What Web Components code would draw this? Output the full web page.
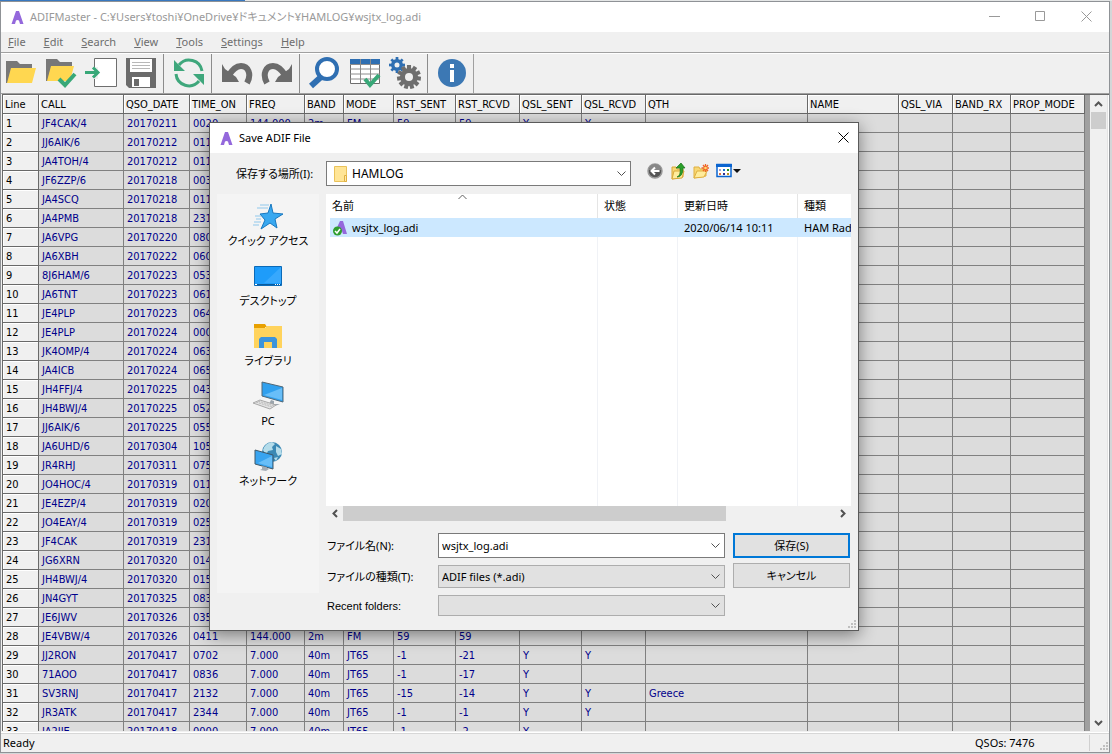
<!DOCTYPE html>
<html lang="ja">
<head>
<meta charset="utf-8">
<title>ADIFMaster</title>
<style>
  html, body { margin: 0; height: 100%; }
  body {
    overflow: hidden;
    --ui: "Noto Sans", "Noto Sans CJK JP", sans-serif;
    --grid: "DejaVu Sans Condensed", "DejaVu Sans", sans-serif;
    --face: #f0f0f0;
    --line: #808080;
    font-family: var(--ui);
    font-size: 12px;
    color: #000;
  }
</style>
</head>
<body>
<adif-desktop>
  <adif-window>
    <title-bar slot="title">ADIFMaster - C:¥Users¥toshi¥OneDrive¥ドキュメント¥HAMLOG¥wsjtx_log.adi</title-bar>
    <menu-bar slot="menu" items="File,Edit,Search,View,Tools,Settings,Help"></menu-bar>
    <tool-bar slot="tools"></tool-bar>
    <log-grid slot="content"></log-grid>
    <status-bar slot="status">Ready<span slot="count">QSOs: 7476</span></status-bar>
  </adif-window>
  <save-dialog></save-dialog>
</adif-desktop>

<script>
const define = (name, html, setup) => {
  const template = document.createElement('template');
  template.innerHTML = html;
  customElements.define(name, class extends HTMLElement {
    constructor() {
      super();
      this.attachShadow({ mode: 'open' }).append(template.content.cloneNode(true));
    }
    connectedCallback() {
      if (setup && !this.ready) { this.ready = true; setup(this, this.shadowRoot); }
    }
  });
};

const LOGO = `<svg width="13" height="13" viewBox="0 0 13 13" aria-hidden="true"><path d="M5 0h3l4.500 13H9L8 9.500Q6.500 8.500 5 9.500L4 13H.5z" fill="#9468dc"/></svg>`;
const GRIP = `<svg width="9" height="9" viewBox="0 0 9 9" fill="#bfbfbf" aria-hidden="true"><path d="M6 0h2v2H6zM3 3h2v2H3zM6 3h2v2H6zM0 6h2v2H0zM3 6h2v2H3zM6 6h2v2H6z"/></svg>`;
const gear = (cx, cy, r, hole, n, color) => {
  let teeth = '';
  for (let i = 0; i < n; i++)
    teeth += `<rect x="${cx - r * .17}" y="${cy - r}" width="${r * .34}" height="${r * .5}" transform="rotate(${i * 360 / n} ${cx} ${cy})"/>`;
  return `<g fill="${color}">${teeth}</g><circle cx="${cx}" cy="${cy}" r="${(r * .75 + hole) / 2}" fill="none" stroke="${color}" stroke-width="${r * .75 - hole}"/>`;
};
const FOLDER = `<path d="M0 3h11l3 3h12v4H6L2 25H0z" fill="#787878"/><path d="M5 10h25l-4 15H1z" fill="#ffd750"/>`;
const ICONS = {
  Open: `<g transform="translate(1 1)">${FOLDER}</g>`,
  'Open and check': `<g transform="translate(1 -1)"><path d="M0 3h11l3 3h12v4H6L2 25H0z" fill="#787878"/><path d="M5 10h23l-4 15H1z" fill="#ffd750"/></g><path d="M14 22l6 6L30 17" fill="none" stroke="#38a878" stroke-width="4"/>`,
  Import: `<path d="M9.500 1.500h22v28h-22z" fill="#fff" stroke="#6e6e6e"/><path d="M5 10h8v12H5z" fill="#f0f0f0"/><path d="M9 12v9" stroke="#fff"/><path d="M0 15.500h13M8 10.500l5 5-5 5" fill="none" stroke="#38a878" stroke-width="3"/>`,
  Save: `<path d="M1 1h30v30H4l-3-3z" fill="#6b6b6b"/><path d="M5 2h22v13H5z" fill="#fff"/><path d="M7 5.500h18M7 8.500h18M7 11.500h18" stroke="#b8b8b8"/><path d="M7 20h18v10H7z" fill="#fff"/><path d="M9 22h5v7H9z" fill="#6b6b6b"/>`,
  Refresh: `<g fill="none" stroke="#3fa77c" stroke-width="3"><path d="M29 14A13 13 0 0 0 6 8"/><path d="M3 17a13 13 0 0 0 23 7"/></g><path d="M1 3v11h11zM31 28V17H20z" fill="#3fa77c"/>`,
  Undo: `<path d="M26 26C31 17 27 9 20 9c-5 0-8 3-12 9" fill="none" stroke="#6b6b6b" stroke-width="6"/><path d="M1 7l3 5 11 8 3 5H1z" fill="#6b6b6b"/>`,
  Redo: `<path d="M6 26C1 17 5 9 12 9c5 0 8 3 12 9" fill="none" stroke="#6b6b6b" stroke-width="6"/><path d="M31 7l-3 5-11 8-3 5h17z" fill="#6b6b6b"/>`,
  Find: `<path d="M2 29l10-9" stroke="#2f6fb2" stroke-width="6"/><circle cx="18" cy="12" r="10" fill="#fff" stroke="#2f6fb2" stroke-width="4"/>`,
  Table: `<path d="M1.500 2.500h29v24h-29z" fill="#fff" stroke="#6e6e6e"/><path d="M1 2h30v5H1z" fill="#2f6fb2"/><path d="M1 7.500h30M1 12h30M1 17h30M1 22h30M11.500 2v24M21.500 2v24" stroke="#8c8c8c"/><path d="M16 22l5 6 9-10" fill="none" stroke="#38a878" stroke-width="4"/>`,
  Options: gear(8, 8, 8, 2.5, 8, '#2f6fb2') + gear(20, 20, 12, 4, 11, '#6e6e6e'),
  About: `<circle cx="15" cy="16" r="14" fill="#3c78b4"/><path d="M13 7h4v4h-4zM13 13h4v12h-4z" fill="#fff"/>`
};

define('adif-desktop', `
  <style>
    :host { display: block; position: relative; box-sizing: border-box; height: 100vh; padding: 1px 2px 1px 0;
      background: linear-gradient(90deg, #3878c0 245px, #e4e6e6 245px) top / 100% 1px no-repeat, #d3d7d8; }
  </style><slot></slot>`);

define('adif-window', `
  <style>
    :host { display: flex; flex-direction: column; box-sizing: border-box; height: 100%; border: 1px solid #8f9296; background: var(--face); }
    ::slotted(log-grid) { flex: 1; min-height: 0; }
  </style>
  <slot name="title"></slot><slot name="menu"></slot><slot name="tools"></slot><slot name="content"></slot><slot name="status"></slot>`);

define('title-bar', `
  <style>
    :host { display: flex; align-items: center; height: 30px; padding-left: 10px; background: #fff; color: #999; }
    h1 { flex: 1; margin: 0 0 0 6px; font: 11px/16px var(--ui); white-space: nowrap; font-feature-settings: "palt"; }
    button { display: grid; place-items: center; width: 46px; height: 28px; margin-bottom: 2px; padding: 0; border: 0; background: none; }
    svg { fill: none; }
  </style>
  ${LOGO}
  <h1><slot></slot></h1>
  <button aria-label="Minimize"><svg width="11" height="11" stroke="#999"><path d="M0 5.500h11"/></svg></button>
  <button aria-label="Maximize"><svg width="11" height="11" stroke="#999"><path d="M.5 .5h9v9H.5z"/></svg></button>
  <button aria-label="Close"><svg width="11" height="11" stroke="#999"><path d="M.5 .5l10 10M10.500 .5l-10 10"/></svg></button>`);

define('menu-bar', `
  <style>
    :host { display: block; height: 20px; border-bottom: 1px solid #a0a0a0; box-shadow: 0 1px #fff; margin-bottom: 1px; }
    nav { display: flex; gap: 18px; padding-left: 7px; }
    button { padding: 0; border: 0; background: none; font: 11px/20px var(--ui); color: #6d6d6d; }
    button::first-letter { text-decoration: underline; }
  </style><nav></nav>`,
  (host, root) => {
    root.querySelector('nav').innerHTML = host.getAttribute('items').split(',')
      .map(t => `<button>${t}</button>`).join('');
  });

define('tool-bar', `
  <style>
    :host { display: flex; height: 39px; border-bottom: 1px solid #a0a0a0; }
    .group { display: flex; border-right: 1px solid #8c8c8c; padding-right: 2px; margin-right: 5px; }
    .group:last-child { padding: 0; border-color: #a0a0a0; }
    button { display: grid; place-items: center; width: 40px; height: 37px; padding: 0; border: 0; background: none; }
  </style>`,
  (host, root) => {
    const groups = [['Open', 'Open and check', 'Import', 'Save'], ['Refresh'], ['Undo', 'Redo'], ['Find', 'Table', 'Options'], ['About']];
    for (const names of groups) {
      const div = document.createElement('div');
      div.className = 'group';
      div.innerHTML = names.map(n => `<button aria-label="${n}"><svg width="32" height="32" viewBox="0 0 32 32">${ICONS[n]}</svg></button>`).join('');
      root.append(div);
    }
  });

const COLUMNS = [['Line', 36], ['CALL', 85], ['QSO_DATE', 66], ['TIME_ON', 57], ['FREQ', 58], ['BAND', 39], ['MODE', 50], ['RST_SENT', 62], ['RST_RCVD', 64], ['QSL_SENT', 62], ['QSL_RCVD', 64], ['QTH', 162], ['NAME', 91], ['QSL_VIA', 54], ['BAND_RX', 58], ['PROP_MODE', 74]];
const RECORDS = `JF4CAK/4,20170211,0020,144.000,2m,FM,59,59,Y,Y
JJ6AIK/6,20170212,011
JA4TOH/4,20170212,011
JF6ZZP/6,20170218,003
JA4SCQ,20170218,011
JA4PMB,20170218,231
JA6VPG,20170220,080
JA6XBH,20170222,060
8J6HAM/6,20170223,053
JA6TNT,20170223,061
JE4PLP,20170223,064
JE4PLP,20170224,000
JK4OMP/4,20170224,063
JA4ICB,20170224,065
JH4FFJ/4,20170225,043
JH4BWJ/4,20170225,052
JJ6AIK/6,20170225,055
JA6UHD/6,20170304,105
JR4RHJ,20170311,075
JO4HOC/4,20170319,011
JE4EZP/4,20170319,020
JO4EAY/4,20170319,025
JF4CAK,20170319,231
JG6XRN,20170320,014
JH4BWJ/4,20170320,015
JN4GYT,20170325,083
JE6JWV,20170326,035
JE4VBW/4,20170326,0411,144.000,2m,FM,59,59
JJ2RON,20170417,0702,7.000,40m,JT65,-1,-21,Y,Y
71AOO,20170417,0836,7.000,40m,JT65,-1,-17,Y
SV3RNJ,20170417,2132,7.000,40m,JT65,-15,-14,Y,Y,Greece
JR3ATK,20170417,2344,7.000,40m,JT65,-1,-1,Y,Y
JA2IJE,20170418,0000,7.000,40m,JT65,-1,-2,Y`.split('\n').map(r => r.split(','));

define('log-grid', `
  <style>
    :host { display: flex; border-top: 1px solid #696969; border-left: 1px solid #696969; margin-left: 1px; padding-right: 2px; background: linear-gradient(#fff, #fff) right / 1px 100% no-repeat, #e3e3e3; overflow: hidden; }
    .view { flex: 1; min-width: 0; overflow: hidden; background: #a0a0a0; }
    table { width: 1082px; table-layout: fixed; border-spacing: 0; font: 11px/16px var(--grid); color: #00008b; }
    th, td { box-sizing: border-box; height: 19px; padding: 2px 0 0 3px; border-right: 1px solid var(--line); border-bottom: 1px solid var(--line); background: #dcdcdc; text-align: left; font-weight: normal; white-space: nowrap; overflow: hidden; }
    th { padding-left: 2px; border-color: #696969; background: var(--face); box-shadow: inset 1px 1px #fff; color: #000; }
    tbody th { padding-left: 3px; }
    .scroll { display: flex; flex-direction: column; width: 17px; background: var(--face); }
    .scroll button { display: grid; place-items: center; height: 17px; padding: 0; border: 0; background: none; }
    .thumb { flex: 1; }
    .thumb::before { content: ""; display: block; height: 17px; margin: 0 1px; background: #cdcdcd; }
    svg { fill: none; stroke: #555; stroke-width: 2; }
  </style>
  <div class="view"><table><colgroup></colgroup><thead></thead><tbody></tbody></table></div>
  <div class="scroll">
    <button aria-label="Scroll up"><svg width="9" height="6"><path d="M1 5l3.500-3.500L8 5"/></svg></button>
    <div class="thumb"></div>
    <button aria-label="Scroll down"><svg width="9" height="6"><path d="M1 1l3.500 3.500L8 1"/></svg></button>
  </div>`,
  (host, root) => {
    root.querySelector('colgroup').innerHTML = COLUMNS.map(c => `<col style="width:${c[1]}px">`).join('');
    root.querySelector('thead').innerHTML = `<tr>${COLUMNS.map(c => `<th scope="col">${c[0]}</th>`).join('')}</tr>`;
    root.querySelector('tbody').innerHTML = RECORDS.map((r, i) =>
      `<tr><th scope="row">${i + 1}</th>${COLUMNS.slice(1).map((c, k) => `<td>${r[k] || ''}</td>`).join('')}</tr>`).join('');
  });

define('status-bar', `
  <style>
    :host { display: flex; align-items: center; height: 18px; padding-left: 2px; border-top: 1px solid #d7d7d7; box-shadow: 0 -1px #fff; margin-top: 2px; font: 11px/16px var(--ui); }
    .text { flex: 1; }
    .count { width: 114px; border-right: 1px solid #d0d0d0; }
    .grip { width: 19px; display: flex; justify-content: flex-end; align-self: flex-end; padding-bottom: 1px; box-sizing: border-box; }
  </style>
  <span class="text"><slot></slot></span><span class="count"><slot name="count"></slot></span><span class="grip">${GRIP}</span>`);

define('combo-box', `
  <style>
    :host { display: grid; grid-template-columns: var(--label, 111px) 1fr; align-items: center; }
    label { font: 11px/16px var(--label-font, var(--ui)); font-feature-settings: "palt"; white-space: nowrap; }
    .box { display: flex; align-items: center; position: relative; box-sizing: border-box; height: var(--box, 23px); border: 1px solid #adadad; background: #e1e1e1; }
    :host([white]) .box { border-color: #7a7a7a; background: #fff; }
    input, select { flex: 1; min-width: 0; height: 100%; box-sizing: border-box; margin: 0; padding: 0 20px 0 3px; border: 0; outline: 0; background: none; appearance: none; border-radius: 0; font: var(--size, 11px)/16px var(--ui); color: #000; }
    .arrow { position: absolute; right: 4px; fill: none; stroke: #505050; pointer-events: none; }
    ::slotted(svg) { margin: 0 1px 0 7px; }
  </style>
  <label for="field"></label>
  <span class="box"><slot></slot><svg class="arrow" width="9" height="6"><path d="M.5 .5l4 4 4-4"/></svg></span>`,
  (host, root) => {
    root.querySelector('label').textContent = host.getAttribute('label');
    const editable = host.hasAttribute('editable');
    const field = document.createElement(editable ? 'input' : 'select');
    field.id = 'field';
    const value = host.getAttribute('value') || '';
    if (editable) field.value = value; else field.add(new Option(value));
    root.querySelector('.arrow').before(field);
  });

define('place-item', `
  <style>
    :host { display: block; }
    button { display: flex; flex-direction: column; align-items: center; width: 100%; height: 60px; padding: 6px 0 0; border: 0; background: none; color: #000; font: 11px/18px var(--ui); font-feature-settings: "palt"; white-space: nowrap; }
  </style><button><slot name="icon"></slot><slot></slot></button>`);

define('file-list', `
  <style>
    :host { display: flex; flex-direction: column; min-width: 0; }
    .view { position: relative; flex: 1; overflow: hidden;
      background: linear-gradient(#f0f2f6, #f0f2f6) 271px 0 / 1px 100% no-repeat, linear-gradient(#f0f2f6, #f0f2f6) 351px 0 / 1px 100% no-repeat, linear-gradient(#f0f2f6, #f0f2f6) 471px 0 / 1px 100% no-repeat, #fff; }
    table { width: 720px; table-layout: fixed; border-spacing: 0; font: 11px/16px var(--ui); }
    th, td { box-sizing: border-box; height: 24px; padding: 0 0 0 6px; text-align: left; font-weight: normal; white-space: nowrap; }
    th { border-right: 1px solid #e5e5e5; }
    td { height: 19px; background: #cce8ff; }
    td:first-child { padding-left: 3px; background: linear-gradient(90deg, #fff 4px, #cce8ff 4px); }
    .file { display: flex; align-items: center; gap: 5px; }
    .sort { position: absolute; left: 132px; top: 0; fill: none; stroke: #606060; }
    .scroll { display: flex; align-items: center; height: 15px; }
    .scroll button { display: grid; place-items: center; width: 17px; height: 15px; padding: 0; border: 0; background: none; }
    .scroll svg { fill: none; stroke: #505050; stroke-width: 2; }
    .track { flex: 1; height: 15px; }
    .thumb { width: 78%; height: 15px; background: #cdcdcd; }
  </style>
  <div class="view">
    <table>
      <colgroup><col style="width:272px"><col style="width:80px"><col style="width:120px"><col></colgroup>
      <thead><tr><th scope="col">名前</th><th scope="col">状態</th><th scope="col">更新日時</th><th scope="col">種類</th></tr></thead>
      <tbody><tr>
        <td><span class="file"><svg width="18" height="16" viewBox="0 0 18 16"><path d="M11 1h3l4 13h-4l-1-3-3 1-3 2H5z" fill="#9468dc"/><circle cx="8.500" cy="11" r="4.500" fill="#2f9e2f"/><path d="M6 11l2 2 3-4" fill="none" stroke="#fff" stroke-width="1.500"/></svg>wsjtx_log.adi</span></td>
        <td></td><td>2020/06/14 10:11</td><td>HAM Radio</td>
      </tr></tbody>
    </table>
    <svg class="sort" width="9" height="6"><path d="M.5 5l4-4 4 4"/></svg>
  </div>
  <div class="scroll">
    <button aria-label="Scroll left"><svg width="6" height="9"><path d="M5 1L1.500 4.500 5 8"/></svg></button>
    <div class="track"><div class="thumb"></div></div>
    <button aria-label="Scroll right"><svg width="6" height="9"><path d="M1 1l3.500 3.500L1 8"/></svg></button>
  </div>`);

define('save-dialog', `
  <style>
    :host { position: absolute; left: 209px; top: 122px; width: 650px; height: 509px; box-sizing: border-box; display: flex; flex-direction: column; border: 1px solid #5a5a5a; background: var(--face); box-shadow: 0 4px 16px rgba(0,0,0,.45); }
    header { display: flex; align-items: center; height: 30px; padding-left: 10px; background: #fff; }
    h2 { flex: 1; margin: 0 0 0 6px; font: 11px/16px var(--ui); }
    button { padding: 0; }
    header button, .tools button { display: grid; place-items: center; border: 0; background: none; }
    header button { width: 30px; height: 28px; margin-bottom: 2px; }
    .top { display: flex; align-items: center; padding: 8px 0 0 26px; }
    .top combo-box { width: 395px; --label: 90px; --box: 25px; --size: 12px; }
    .tools { display: flex; gap: 7px; padding: 0 0 5px 16px; }
    .tools button { height: 18px; }
    main { flex: 1; display: grid; grid-template-columns: 102px minmax(0, 1fr); column-gap: 7px; padding: 8px 7px 37px; min-height: 0; }
    .places { background: #f4f4f4; }
    .work { display: flex; flex-direction: column; min-width: 0; min-height: 0; margin-bottom: -23px; }
    file-list { height: 327px; }
    form { display: grid; grid-template-columns: 398px 117px; column-gap: 8px; padding: 12px 0 0 1px; align-items: start; }
    .fields { display: grid; row-gap: 7px; }
    .fields combo-box:first-child { --box: 25px; }
    .fields combo-box:last-child { --box: 21px; --label-font: "Liberation Sans", sans-serif; }
    .actions { display: grid; row-gap: 5px; }
    .actions button { height: 25px; box-sizing: border-box; border: 1px solid #adadad; background: #e1e1e1; color: #000; font: 11px/16px var(--ui); font-feature-settings: "palt"; }
    .actions button:first-child { border: 2px solid #0078d7; }
    .grip { position: absolute; right: 1px; bottom: 1px; line-height: 0; }
  </style>
  <header>${LOGO}<h2>Save ADIF File</h2>
    <button aria-label="Close"><svg width="11" height="11" stroke="#000"><path d="M.5 .5l10 10M10.500 .5l-10 10"/></svg></button></header>
  <div class="top">
    <combo-box white label="保存する場所(I):" value="HAMLOG"><svg width="14" height="16" viewBox="0 0 14 16"><path d="M.5 .5h12v15H.5z" fill="#ffe596" stroke="#eac25a"/><path d="M10.500 9.500h2v6h-2z" fill="#ffe9a8" stroke="#e0b040"/></svg></combo-box>
    <div class="tools">
      <button aria-label="Back"><svg width="16" height="16" viewBox="0 0 16 16"><circle cx="8" cy="8" r="7" fill="#555" stroke="#999" stroke-width="1.500"/><path d="M2 7a6 6 0 0 1 12 0z" fill="#888"/><path d="M12.500 8H5M8 4.500L4.500 8 8 11.500" fill="none" stroke="#fff" stroke-width="2"/></svg></button>
      <button aria-label="Up one level"><svg width="16" height="18" viewBox="0 0 16 18"><path d="M2 5h4l1 2h6v8l-11 2z" fill="#f7d774" stroke="#d8a838"/><path d="M4 9h10l-2 7-10 1z" fill="#ffec9c" stroke="#d8a838"/><path d="M7 15q4-1 3-9H6l5-5 4 5h-2q0 9-6 9z" fill="#2aa02a" stroke="#187018" stroke-width=".7"/></svg></button>
      <button aria-label="New folder"><svg width="16" height="16" viewBox="0 0 16 16"><path d="M1 4h5l1 2h6v7L1 15z" fill="#f7d774" stroke="#e0b040"/><path d="M4 8h10l-3 6-10 1z" fill="#ffec9c" stroke="#e0b040"/><path d="M12.500 1v8M8.500 5h8M10 2l5 6M15 2l-5 6" stroke="#f06428" stroke-width="1.300"/><circle cx="12.500" cy="5" r="1.300" fill="#ffe070"/></svg></button>
      <button aria-label="View menu"><svg width="25" height="16" viewBox="0 0 25 16"><path d="M1 1.500h14v12H1z" fill="#fff" stroke="#0a64d0" stroke-width="1.500"/><path d="M0 1h16v3H0z" fill="#0a64d0"/><path d="M3 6h2v2H3z" fill="#a0a0d0"/><path d="M7 6h2v2H7z" fill="#2070d0"/><path d="M11 6h2v2h-2z" fill="#209020"/><path d="M3 10h2v2H3z" fill="#e07040"/><path d="M7 10h2v2H7z" fill="#303090"/><path d="M11 10h2v2h-2z" fill="#c09020"/><path d="M17 6h8l-4 4z" fill="#111"/></svg></button>
    </div>
  </div>
  <main>
    <nav class="places">
      <place-item>クイック アクセス<svg slot="icon" width="32" height="32" viewBox="0 0 32 32"><path d="M19 4l2 9 10 1-8 5 2 9-7-5-9 6 4-9-5-6 8-1z" fill="#38a8f0" stroke="#1878c0"/><path d="M8 5h9M5 8h11M3 16h6M4 19h5M2 22h7M1 25h6" stroke="#90c8ec"/></svg></place-item>
      <place-item>デスクトップ<svg slot="icon" width="32" height="32" viewBox="0 0 32 32"><path d="M2.500 6.500h27v19h-27z" fill="#1e9cfa" stroke="#0a6ab8"/><path d="M29 7v16L12 23z" fill="#48b0ff" opacity=".6"/><path d="M3 24.500h26" stroke="#0a5a9c"/><path d="M3 24.500h2M23 24.500h1M25 24.500h1M27 24.500h1" stroke="#fff"/></svg></place-item>
      <place-item>ライブラリ<svg slot="icon" width="32" height="32" viewBox="0 0 32 32"><path d="M2 4h11l2 3h-2v2H2z" fill="#e8a000"/><path d="M2 8h11l2-2h15v22H2z" fill="#ffd35c"/><path d="M7 28V19l2-2h14l2 2v9h-5v-6h-8v6z" fill="#3c94dc"/></svg></place-item>
      <place-item>PC<svg slot="icon" width="32" height="32" viewBox="0 0 32 32"><path d="M10 2l21 5v15l-21-6z" fill="#30a0ee" stroke="#506878"/><path d="M30 8v12L12 15z" fill="#68bef8"/><path d="M19 20l3 1v3h6l-5 2-6-2z" fill="#9aa4ac"/><path d="M1 23l7-3 16 5-6 4z" fill="#e4e4e4" stroke="#a8a8a8"/><path d="M4 22l16 5M6 21l16 5" stroke="#b8b8b8" stroke-dasharray="2 1"/></svg></place-item>
      <place-item>ネットワーク<svg slot="icon" width="32" height="32" viewBox="0 0 32 32"><circle cx="20" cy="12" r="10" fill="#3a88b4"/><path d="M11 10q2-7 9-8l3 2-3 3 1 3-5 1-2 4zM24 6l5 3 1 5-4 2-2-4zM22 18l4-1-2 4z" fill="#b4dcea"/><path d="M3 10l18 5v14L3 24z" fill="#38a4f0" stroke="#405868"/><path d="M20 16v11L6 23z" fill="#68bef8"/><path d="M10 26v3l-2 1 6 1 3-2-3-2z" fill="#a4acb4"/></svg></place-item>
    </nav>
    <div class="work">
      <file-list></file-list>
      <form onsubmit="return false">
        <div class="fields">
          <combo-box white editable label="ファイル名(N):" value="wsjtx_log.adi"></combo-box>
          <combo-box label="ファイルの種類(T):" value="ADIF files (*.adi)"></combo-box>
          <combo-box label="Recent folders:"></combo-box>
        </div>
        <div class="actions"><button>保存(S)</button><button>キャンセル</button></div>
      </form>
    </div>
  </main>
  <span class="grip">${GRIP}</span>`);
</script>
</body>
</html>
